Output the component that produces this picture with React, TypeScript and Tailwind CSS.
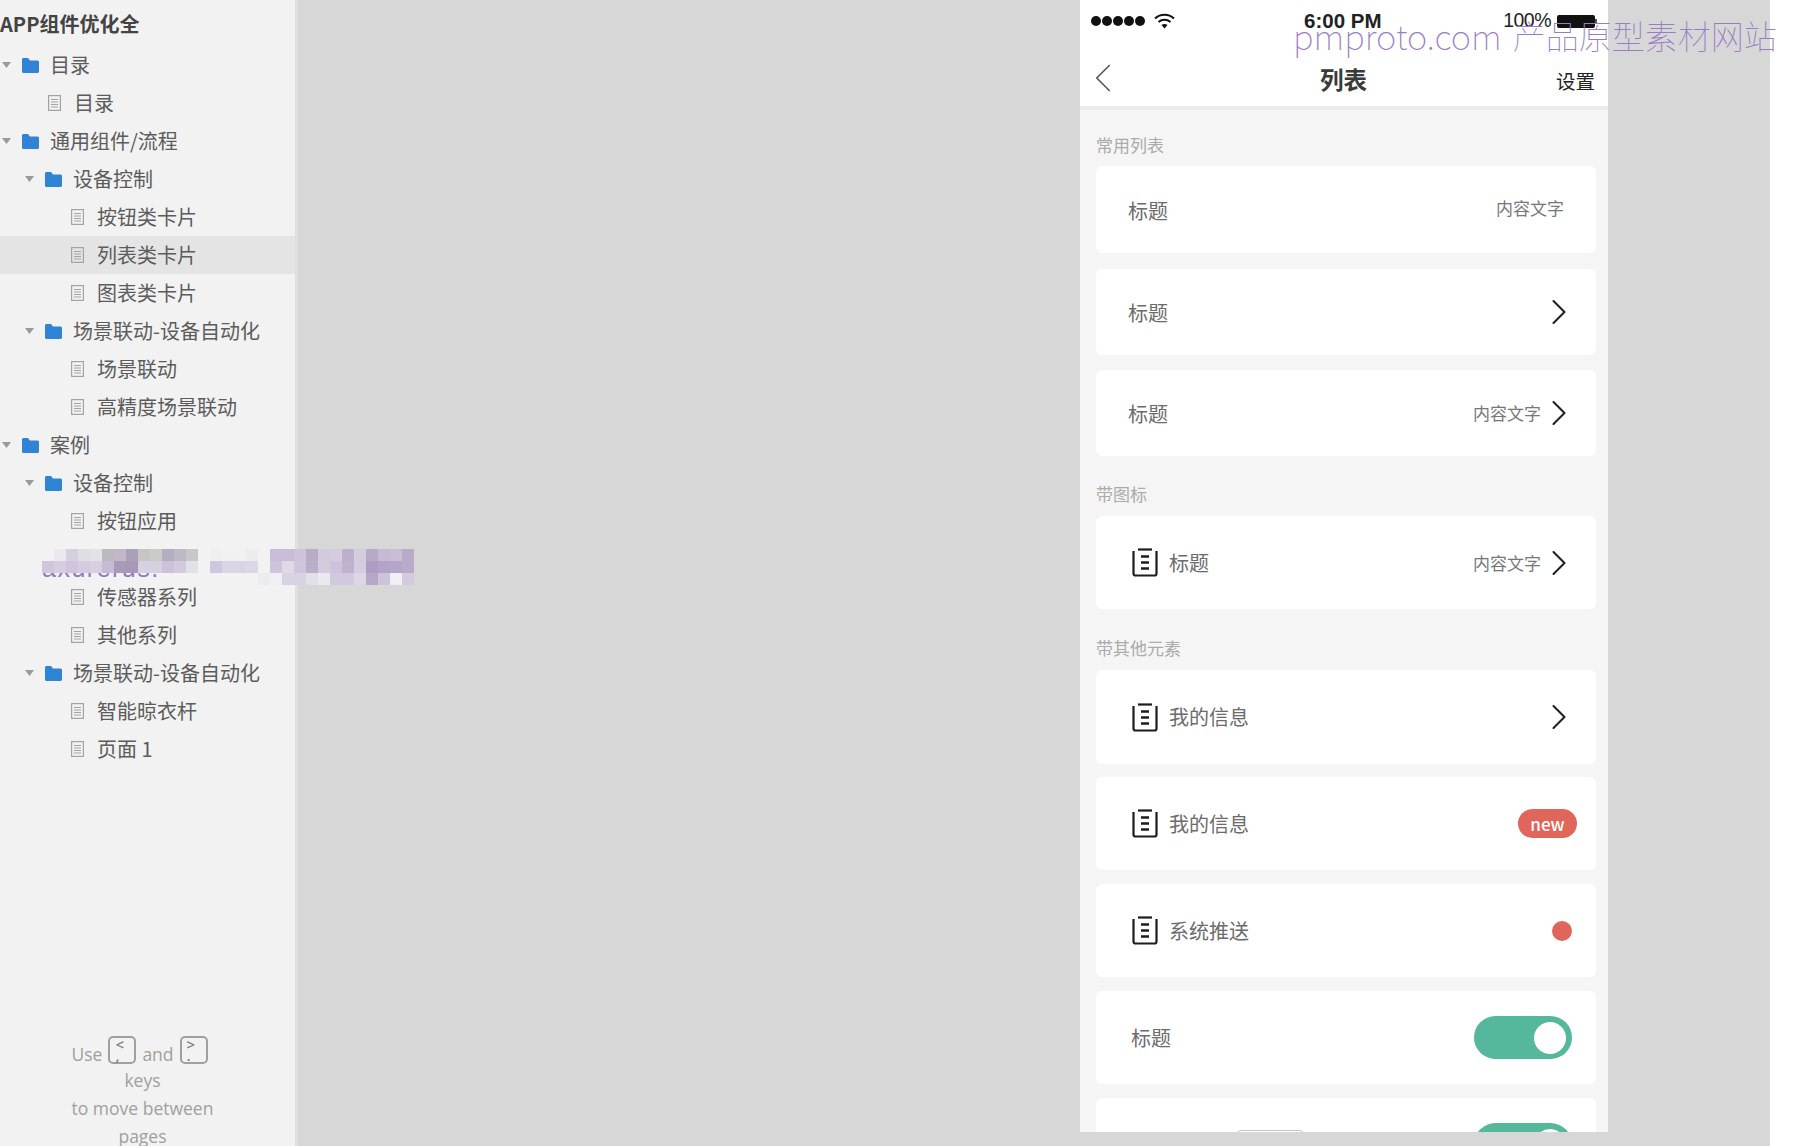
import React from "react";
import { ChevronLeft, ChevronRight } from "lucide-react";

const FONT = "[font-family:'Noto_Sans_CJK_SC','Liberation_Sans',sans-serif]";

type TreeRow = { label: string; level: number; kind: "folder" | "page" | "hidden"; active?: boolean };

const tree: TreeRow[] = [
  { label: "目录", level: 0, kind: "folder" },
  { label: "目录", level: 0, kind: "page" },
  { label: "通用组件/流程", level: 0, kind: "folder" },
  { label: "设备控制", level: 1, kind: "folder" },
  { label: "按钮类卡片", level: 1, kind: "page" },
  { label: "列表类卡片", level: 1, kind: "page", active: true },
  { label: "图表类卡片", level: 1, kind: "page" },
  { label: "场景联动-设备自动化", level: 1, kind: "folder" },
  { label: "场景联动", level: 1, kind: "page" },
  { label: "高精度场景联动", level: 1, kind: "page" },
  { label: "案例", level: 0, kind: "folder" },
  { label: "设备控制", level: 1, kind: "folder" },
  { label: "按钮应用", level: 1, kind: "page" },
  { label: "", level: 1, kind: "hidden" },
  { label: "传感器系列", level: 1, kind: "page" },
  { label: "其他系列", level: 1, kind: "page" },
  { label: "场景联动-设备自动化", level: 1, kind: "folder" },
  { label: "智能晾衣杆", level: 1, kind: "page" },
  { label: "页面 1", level: 1, kind: "page" },
];

// pixelated patch over the tree, 12px cells, empty string = see through
const mosaic: string[][] = [
  ["", "#ebe9ee", "#d6cfde", "#e0dde4", "#e4e1e8", "#bdbabd", "#c0b8c8", "#ac9fb8", "#c8c6c4", "#cdcbc8", "#b5adc0", "#bfb8c6", "#c9c8c9", "", "#efeef1", "#f1f0f2", "#f1f0f2", "#ecebee", "", "#c9bcd8", "#c9bcd8", "#cfc3d9", "#b8abc5", "#d2cbdb", "#d5cddf", "#bdb0cc", "#d3cddc", "#b8a9c9", "#c6bad3", "#c9bdd6", "#b8abc8"],
  ["#cfc6dc", "#d6cde0", "#cfc4da", "#d4cbdf", "#d8d0e0", "#c6bad4", "#a99bb8", "#a698b6", "#d8d0e3", "#d6cfe0", "#ccc3d8", "#d3cadd", "#e3e1e8", "", "#d0c6dd", "#dbd4e4", "#dbd4e4", "#dcd6e6", "", "#cfc4dc", "#dedae6", "#d0c6dc", "#bbaecb", "#d4cbdf", "#cfc3dc", "#c0b2cf", "#d4cce0", "#ae9cc3", "#b4a3c6", "#b5a5c8", "#b8abc9"],
  ["", "", "", "", "", "", "", "", "", "", "", "", "", "", "", "", "", "", "#ecebf0", "#f0eff3", "#d9d2e2", "#d9d2e2", "#e2deea", "#ebe9f0", "#d2c9dd", "#d2c9dd", "#dcd6e5", "#b6a7c9", "#cdc3da", "#f0eff3", "#d3cbdd"],
];

function FolderIcon() {
  return (
    <svg width="17" height="15" viewBox="0 0 17 15" className="shrink-0">
      <path d="M0 1.5C0 .7.7 0 1.500 0H6l2 2.500h7.500c.8 0 1.500.7 1.500 1.500v9.500c0 .8-.7 1.500-1.500 1.500h-14C.7 15 0 14.300 0 13.500z" fill="#2f84d5" />
    </svg>
  );
}

function PageIcon() {
  return (
    <svg width="13" height="16" viewBox="0 0 13 16" fill="none" stroke="#a3a3a3" strokeWidth="1.200" className="shrink-0">
      <rect x=".6" y=".6" width="11.800" height="14.800" />
      <path d="M3 4.500h7M3 7h7M3 9.500h7M3 12h7" />
    </svg>
  );
}

function Caret() {
  return (
    <svg width="9" height="6" viewBox="0 0 9 6" className="shrink-0">
      <path d="M0 0h9L4.500 6z" fill="#9a9a9a" />
    </svg>
  );
}

function TreeItem({ row }: { row: TreeRow }) {
  if (row.kind === "hidden") return <div className="h-[38px] shrink-0" />;
  const left = row.level === 0 ? "pl-[2px]" : "pl-[25px]";
  return (
    <div className={`flex h-[38px] shrink-0 items-center text-[20px] text-[#5c5c5c] ${row.active ? "bg-[#e4e4e4]" : ""}`}>
      {row.kind === "folder" ? (
        <div className={`flex items-center ${left}`}>
          <Caret />
          <div className="ml-[11px]"><FolderIcon /></div>
          <span className="ml-[11px] whitespace-nowrap">{row.label}</span>
        </div>
      ) : (
        <div className={`flex items-center ${row.level === 0 ? "pl-[48px]" : "pl-[71px]"}`}>
          <PageIcon />
          <span className="ml-[13px] whitespace-nowrap">{row.label}</span>
        </div>
      )}
    </div>
  );
}

function KeyCap({ top, bottom }: { top: string; bottom: string }) {
  return (
    <span className="mx-[6px] inline-flex h-[28px] w-[28px] -translate-y-[1px] flex-col rounded-[5px] border-2 border-[#a0a0a0] pl-[5px] pt-[1px] text-[15px] font-semibold leading-[11px] text-[#808080]">
      <span>{top}</span>
      <span>{bottom}</span>
    </span>
  );
}

function Sidebar() {
  return (
    <aside className={`relative flex h-[1146px] w-[298px] shrink-0 flex-col overflow-hidden border-r-[3px] border-[#dfdfdf] bg-[#f2f2f2] ${FONT}`}>
      <div className="h-[46px] shrink-0 pt-[8px] text-[20px] font-bold leading-[32px] text-[#444]">APP组件优化全</div>
      {tree.map((row, i) => (
        <TreeItem key={i} row={row} />
      ))}
      <div className="mt-[269px] flex w-[285px] shrink-0 flex-col items-center text-[17.500px] leading-[28px] text-[#a0a0a0] [font-family:'Open_Sans',sans-serif]">
        <div className="flex items-end leading-[22px]">
          Use <KeyCap top="<" bottom="," /> and <KeyCap top=">" bottom="." />
        </div>
        <div className="mt-[1px]">keys</div>
        <div>to move between</div>
        <div>pages</div>
      </div>
    </aside>
  );
}

function ListIcon() {
  return (
    <svg width="26" height="29" viewBox="0 0 26 29" fill="none" stroke="#1c1c1c" strokeWidth="2.200" className="shrink-0">
      <path d="M6 1.500h14" />
      <path d="M1.500 3v22.500a2 2 0 0 0 2 2h19a2 2 0 0 0 2-2V3" />
      <path d="M9 8.500h8M9 14.500h8M9 20.500h8" strokeWidth="2.600" />
    </svg>
  );
}

function Arrow() {
  return <ChevronRight size={44} strokeWidth={1.150} className="-ml-[4px] shrink-0 text-[#1f1f1f]" />;
}

function Card({ height, children, className = "" }: { height: string; children: React.ReactNode; className?: string }) {
  return <div className={`ml-[16px] mr-[12px] flex items-center rounded-[6px] bg-white ${height} ${className}`}>{children}</div>;
}

function Title({ children, className = "" }: { children: React.ReactNode; className?: string }) {
  return <span className={`text-[20px] text-[#6b6b6b] ${className}`}>{children}</span>;
}

function Extra() {
  return <span className="text-[17px] text-[#777]">内容文字</span>;
}

function Toggle() {
  return (
    <span className="flex h-[43px] w-[98px] items-center justify-end rounded-full bg-[#55b79c] pr-[6px]">
      <span className="h-[32px] w-[32px] rounded-full bg-white" />
    </span>
  );
}

function SectionLabel({ children, className }: { children: React.ReactNode; className: string }) {
  return <div className={`pl-[16px] text-[17px] leading-[24px] text-[#ababab] ${className}`}>{children}</div>;
}

function StatusBar() {
  return (
    <div className="flex h-[42px] items-center pl-[11px] pr-[11px]">
      <div className="flex w-[213px] items-center gap-[1.500px]">
        {[0, 1, 2, 3, 4].map((i) => (
          <span key={i} className="h-[9.500px] w-[9.500px] rounded-full bg-[#111]" />
        ))}
        <svg width="21" height="16" viewBox="0 0 21 16" fill="none" stroke="#111" strokeWidth="2" className="ml-[8px]">
          <path d="M1 5.500c5.500-5 13.500-5 19 0M4.500 9c3.500-3 8.500-3 12 0" />
          <path d="M10.500 15.500l-3-3.500c1.800-1.200 4.200-1.200 6 0z" fill="#111" stroke="none" />
        </svg>
      </div>
      <span className="text-[20.500px] font-bold text-[#222] [font-family:'Liberation_Sans',sans-serif]">6:00 PM</span>
      <div className="ml-auto flex items-center gap-[6px] [font-family:'Liberation_Sans',sans-serif]">
        <span className="text-[19.500px] tracking-[-0.5px] text-[#222]">100%</span>
        <span className="flex items-center">
          <span className="h-[13px] w-[38px] rounded-[2px] bg-[#111]" />
          <span className="h-[5px] w-[2px] bg-[#555]" />
        </span>
      </div>
    </div>
  );
}

function Phone() {
  return (
    <div className={`ml-[782px] h-[1132px] w-[528px] shrink-0 overflow-hidden bg-[#f5f5f5] ${FONT}`}>
      <div className="bg-white">
        <StatusBar />
        <div className="relative flex h-[64px] items-center justify-between pr-[13px] pt-[8px]">
          <ChevronLeft size={50} strokeWidth={0.800} className="-ml-[2px] text-[#555]" />
          <span className="absolute left-[240px] mt-[3px] text-[23.500px] font-bold text-[#3a3a3a]">列表</span>
          <span className="mt-[5px] text-[19.500px] text-[#222]">设置</span>
        </div>
      </div>
      <div className="h-[4px] bg-[#ececec]" />

      <SectionLabel className="pt-[23px] pb-[9px]">常用列表</SectionLabel>
      <Card height="h-[87px]" className="justify-between pl-[32px] pr-[32px]">
        <Title className="mt-[3px]">标题</Title>
        <span className="-mt-[3px]"><Extra /></span>
      </Card>
      <Card height="h-[86px]" className="mt-[16px] justify-between pl-[32px] pr-[15px]">
        <Title className="mt-[2px]">标题</Title>
        <Arrow />
      </Card>
      <Card height="h-[86px]" className="mt-[15px] justify-between pl-[32px] pr-[15px]">
        <Title className="mt-[2px]">标题</Title>
        <div className="flex items-center"><Extra /><Arrow /></div>
      </Card>

      <SectionLabel className="pt-[26px] pb-[10px]">带图标</SectionLabel>
      <Card height="h-[93px]" className="justify-between pl-[36px] pr-[15px]">
        <div className="flex items-center gap-[11px]"><ListIcon /><Title>标题</Title></div>
        <div className="flex items-center"><Extra /><Arrow /></div>
      </Card>

      <SectionLabel className="pt-[27px] pb-[10px]">带其他元素</SectionLabel>
      <Card height="h-[94px]" className="justify-between pl-[36px] pr-[15px]">
        <div className="flex items-center gap-[11px]"><ListIcon /><Title>我的信息</Title></div>
        <Arrow />
      </Card>
      <Card height="h-[93px]" className="mt-[13px] justify-between pl-[36px] pr-[19px]">
        <div className="flex items-center gap-[11px]"><ListIcon /><Title>我的信息</Title></div>
        <span className="flex h-[29px] w-[59px] items-center justify-center rounded-full bg-[#e0655a] text-[17px] font-medium text-white">new</span>
      </Card>
      <Card height="h-[93px]" className="mt-[14px] justify-between pl-[36px] pr-[24px]">
        <div className="flex items-center gap-[11px]"><ListIcon /><Title>系统推送</Title></div>
        <span className="h-[20px] w-[20px] rounded-full bg-[#e0655a]" />
      </Card>
      <Card height="h-[93px]" className="mt-[14px] justify-between pl-[35px] pr-[24px]">
        <Title>标题</Title>
        <Toggle />
      </Card>
      <div className="relative ml-[16px] mr-[12px] mt-[14px] h-[93px] rounded-[6px] bg-white">
        <div className="absolute left-[141px] top-[32px] h-[20px] w-[67px] rounded-[4px] border border-[#c4c4c4]" />
        <div className="absolute right-[24px] top-[25px]"><Toggle /></div>
      </div>
    </div>
  );
}

export default function App() {
  return (
    <div className="relative flex h-[1146px] w-[1818px] overflow-hidden bg-white">
      <Sidebar />
      <main className="flex h-[1146px] w-[1472px] shrink-0 bg-[#d7d7d7]">
        <Phone />
      </main>

      {/* watermark over the page */}
      <div className="absolute left-[1293px] top-[11px] flex items-center whitespace-nowrap font-thin leading-[48px] text-[#9a7cc4] [font-family:'Noto_Sans_CJK_SC','Lato',sans-serif]">
        <span className="text-[34.500px]">pmproto.com</span>
        <span className="ml-[11px] text-[33px]">产品原型素材网站</span>
      </div>

      {/* pixelated stamp in the tree */}
      <div className="absolute left-[42px] top-[549px]">
        <div className="absolute left-0 top-[4px] whitespace-nowrap text-[25px] leading-[30px] tracking-[1.500px] text-[#8f7cc8] [font-family:'Liberation_Sans',sans-serif]">axurerus.</div>
        <div className="relative">
          {mosaic.map((cells, r) => (
            <div key={r} className="flex h-[12px]">
              {cells.map((c, i) => (
                <span key={i} className="h-[12px] w-[12px]" style={{ background: c || "transparent" }} />
              ))}
            </div>
          ))}
        </div>
      </div>
    </div>
  );
}
